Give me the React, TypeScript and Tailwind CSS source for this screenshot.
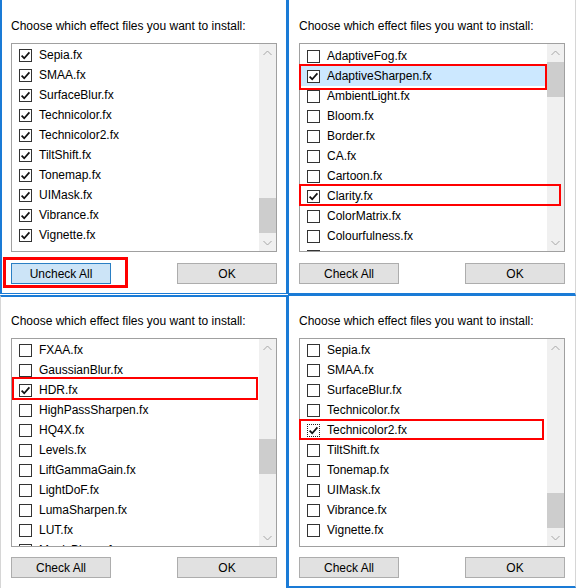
import type { ReactNode } from "react";

type Item = { name: string; checked?: boolean; selected?: boolean; focus?: boolean };

const BLUE = "border-[#1a7bd6]";

function CheckBox({ checked, focus }: { checked?: boolean; focus?: boolean }) {
	return (
		<span
			className={`flex size-[13px] shrink-0 items-center justify-center border bg-white ${
				focus ? "border-dotted border-[#222]" : "border-[#333]"
			}`}
		>
			{checked && (
				<svg width="11" height="11" viewBox="0 0 11 11">
					<path d="M1.6 5.6 L4.2 8.2 L9.4 2.4" fill="none" stroke="#111" strokeWidth="1.7" />
				</svg>
			)}
		</span>
	);
}

function Chevron({ up }: { up?: boolean }) {
	return (
		<svg width="9" height="6" viewBox="0 0 9 6">
			<path
				d={up ? "M0.5 5 L4.5 1 L8.5 5" : "M0.5 1 L4.5 5 L8.5 1"}
				fill="none"
				stroke="#a6a6a6"
				strokeWidth="1"
			/>
		</svg>
	);
}

interface PanelProps {
	className: string;
	labelTop: string;
	buttonGap: string;
	rowsPad: string;
	thumbOffset: string;
	items: Item[];
	leftLabel: string;
	leftActive?: boolean;
	listOverlay?: ReactNode;
	panelOverlay?: ReactNode;
}

function Panel({
	className,
	labelTop,
	buttonGap,
	rowsPad,
	thumbOffset,
	items,
	leftLabel,
	leftActive,
	listOverlay,
	panelOverlay,
}: PanelProps) {
	return (
		<div className={`relative flex flex-col bg-white ${className}`}>
			<div className={`h-4 text-[12px] leading-4 text-black ${labelTop}`}>
				Choose which effect files you want to install:
			</div>

			{/* list box */}
			<div className="relative mt-[9px] flex h-[209px] w-[266px] border border-[#a0a0a0] bg-white">
				<div className={`flex-1 overflow-hidden ${rowsPad}`}>
					{items.map((it) => (
						<div
							key={it.name}
							className={`flex h-5 items-center pl-[7px] ${it.selected ? "bg-[#cce8ff]" : ""}`}
						>
							<CheckBox checked={it.checked} focus={it.focus} />
							<span className="ml-[7px] text-[12px] leading-4 text-black">{it.name}</span>
						</div>
					))}
				</div>
				<div className="flex w-[17px] flex-col bg-[#f0f0f0]">
					<div className="flex h-[17px] items-center justify-center">
						<Chevron up />
					</div>
					<div className="flex-1">
						<div className={thumbOffset} />
						<div className="h-[35px] bg-[#cdcdcd]" />
					</div>
					<div className="flex h-[17px] items-center justify-center">
						<Chevron />
					</div>
				</div>
				{listOverlay}
			</div>

			{/* buttons */}
			<div className={`flex w-[266px] justify-between ${buttonGap}`}>
				<button
					type="button"
					className={`h-[21px] w-[100px] border text-[12px] leading-4 text-black ${
						leftActive ? "border-[#2a7fc4] bg-[#cce4f7]" : "border-[#adadad] bg-[#e1e1e1]"
					}`}
				>
					{leftLabel}
				</button>
				<button
					type="button"
					className="h-[21px] w-[100px] border border-[#adadad] bg-[#e1e1e1] text-[12px] leading-4 text-black"
				>
					OK
				</button>
			</div>
			{panelOverlay}
		</div>
	);
}

const allChecked: Item[] = [
	"Sepia.fx",
	"SMAA.fx",
	"SurfaceBlur.fx",
	"Technicolor.fx",
	"Technicolor2.fx",
	"TiltShift.fx",
	"Tonemap.fx",
	"UIMask.fx",
	"Vibrance.fx",
	"Vignette.fx",
].map((name) => ({ name, checked: true }));

const topRight: Item[] = [
	{ name: "AdaptiveFog.fx" },
	{ name: "AdaptiveSharpen.fx", checked: true, selected: true },
	{ name: "AmbientLight.fx" },
	{ name: "Bloom.fx" },
	{ name: "Border.fx" },
	{ name: "CA.fx" },
	{ name: "Cartoon.fx" },
	{ name: "Clarity.fx", checked: true },
	{ name: "ColorMatrix.fx" },
	{ name: "Colourfulness.fx" },
	{ name: "Curves.fx" },
];

const bottomLeft: Item[] = [
	{ name: "FXAA.fx" },
	{ name: "GaussianBlur.fx" },
	{ name: "HDR.fx", checked: true },
	{ name: "HighPassSharpen.fx" },
	{ name: "HQ4X.fx" },
	{ name: "Levels.fx" },
	{ name: "LiftGammaGain.fx" },
	{ name: "LightDoF.fx" },
	{ name: "LumaSharpen.fx" },
	{ name: "LUT.fx" },
	{ name: "MagicBloom.fx" },
];

const bottomRight: Item[] = [
	{ name: "Sepia.fx" },
	{ name: "SMAA.fx" },
	{ name: "SurfaceBlur.fx" },
	{ name: "Technicolor.fx" },
	{ name: "Technicolor2.fx", checked: true, focus: true },
	{ name: "TiltShift.fx" },
	{ name: "Tonemap.fx" },
	{ name: "UIMask.fx" },
	{ name: "Vibrance.fx" },
	{ name: "Vignette.fx" },
];

export default function App() {
	return (
		<div className="flex h-[588px] w-[576px] bg-white font-['Liberation_Sans',Arial,sans-serif]">
			{/* left column */}
			<div className="flex w-[288px] flex-col">
				<Panel
					className={`h-[294px] border-b border-l-2 border-r-2 pl-[9px] ${BLUE}`}
					labelTop="mt-[18px]"
					buttonGap="mt-[11px]"
					rowsPad="pt-px"
					thumbOffset="h-[137px]"
					items={allChecked}
					leftLabel="Uncheck All"
					leftActive
					panelOverlay={
						<div className="absolute left-px top-[257px] h-[31px] w-[125px] border-[3px] border-[#ff0000]" />
					}
				/>
				<Panel
					className={`mt-px h-[293px] border-l border-r-2 border-t-2 border-l-[#d6d6d6] pl-[10px] ${BLUE}`}
					labelTop="mt-[16px]"
					buttonGap="mt-[10px]"
					rowsPad="pt-px"
					thumbOffset="h-[83px]"
					items={bottomLeft}
					leftLabel="Check All"
					listOverlay={
						<div className="absolute left-0 top-[38px] h-[23px] w-[246px] border-2 border-[#ff0000]" />
					}
				/>
			</div>

			{/* right column */}
			<div className="flex w-[288px] flex-col">
				<Panel
					className={`h-[296px] border-b-[3px] border-l border-r border-r-[#d6d6d6] pl-[10px] ${BLUE}`}
					labelTop="mt-[18px]"
					buttonGap="mt-[11px]"
					rowsPad="pt-[2px]"
					thumbOffset="h-px"
					items={topRight}
					leftLabel="Check All"
					listOverlay={
						<>
							<div className="absolute -left-px top-[20px] h-[26px] w-[248px] border-2 border-[#ff0000]" />
							<div className="absolute -left-px top-[140px] h-[22px] w-[262px] border-2 border-[#ff0000]" />
						</>
					}
				/>
				<Panel
					className={`h-[292px] border-b-2 border-l border-r border-r-[#d6d6d6] pl-[10px] ${BLUE}`}
					labelTop="mt-[17px]"
					buttonGap="mt-[10px]"
					rowsPad="pt-px"
					thumbOffset="h-[137px]"
					items={bottomRight}
					leftLabel="Check All"
					listOverlay={
						<div className="absolute -left-px top-[80px] h-[21px] w-[245px] border-2 border-[#ff0000]" />
					}
				/>
			</div>
		</div>
	);
}
